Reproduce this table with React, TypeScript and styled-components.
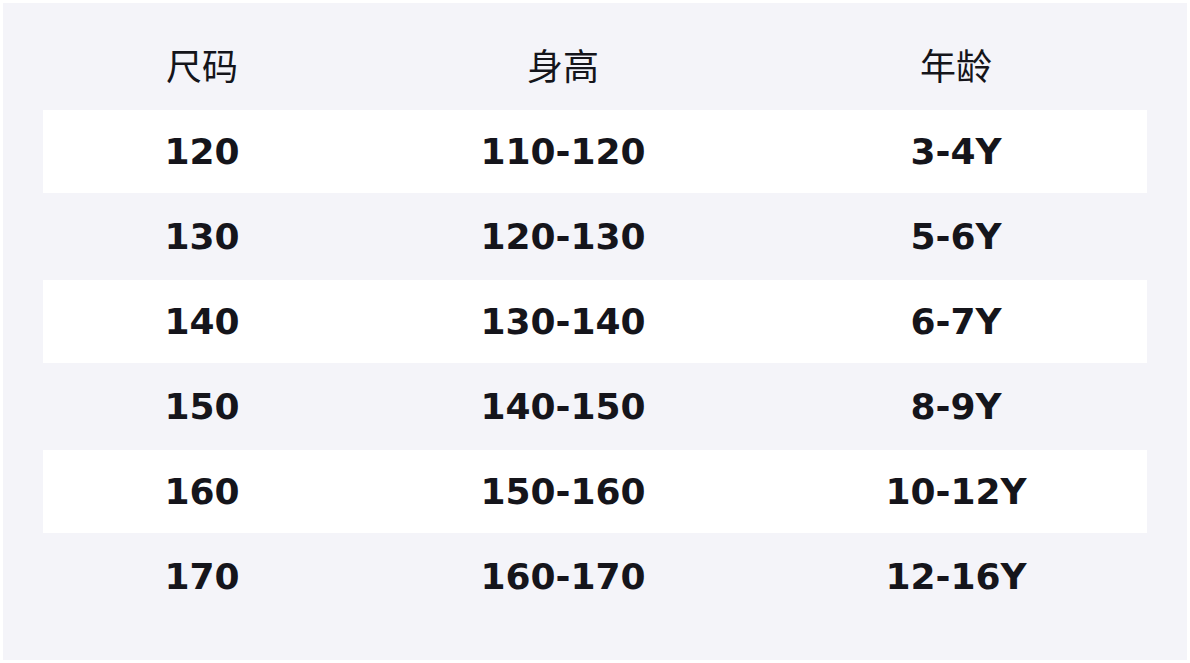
import styled, { createGlobalStyle } from "styled-components";

const GlobalStyle = createGlobalStyle`
  html, body {
    margin: 0;
    background: #ffffff;
  }
  body {
    padding: 3px;
    font-family: "DejaVu Sans", "Noto Sans CJK SC", sans-serif;
  }
`;

const Panel = styled.div`
  background: #f4f4f9;
  height: 657px;
  box-sizing: border-box;
  padding: 20px 40px 40px;
`;

const Table = styled.table`
  width: 100%;
  border-collapse: separate;
  border-spacing: 0 2px;
  table-layout: fixed;
  color: #15151b;
`;

const Col = styled.col<{ $w: number }>`
  width: ${(p) => p.$w}px;
`;

const HeadCell = styled.th`
  height: 83px;
  padding: 0 0 5px;
  box-sizing: border-box;
  font-family: "Noto Sans CJK SC", sans-serif;
  font-weight: 400;
  font-size: 36px;
  text-align: center;
  vertical-align: middle;
`;

const Row = styled.tr<{ $shaded: boolean }>`
  background: ${(p) => (p.$shaded ? "#ffffff" : "transparent")};
`;

const Cell = styled.td`
  height: 83px;
  padding: 0;
  font-family: "DejaVu Sans", sans-serif;
  font-weight: 700;
  font-size: 36px;
  text-align: center;
  vertical-align: middle;
`;

const sizes = [
  ["120", "110-120", "3-4Y"],
  ["130", "120-130", "5-6Y"],
  ["140", "130-140", "6-7Y"],
  ["150", "140-150", "8-9Y"],
  ["160", "150-160", "10-12Y"],
  ["170", "160-170", "12-16Y"],
];

const App = () => {
  return (
    <>
      <GlobalStyle />
      <Panel>
        <Table>
          <colgroup>
            <Col $w={318} />
            <Col $w={404} />
            <Col $w={382} />
          </colgroup>
          <thead>
            <tr>
              <HeadCell>尺码</HeadCell>
              <HeadCell>身高</HeadCell>
              <HeadCell>年龄</HeadCell>
            </tr>
          </thead>
          <tbody>
            {sizes.map((r, i) => (
              <Row key={r[0]} $shaded={i % 2 === 0}>
                {r.map((c) => (
                  <Cell key={c}>{c}</Cell>
                ))}
              </Row>
            ))}
          </tbody>
        </Table>
      </Panel>
    </>
  );
};

export default App;
